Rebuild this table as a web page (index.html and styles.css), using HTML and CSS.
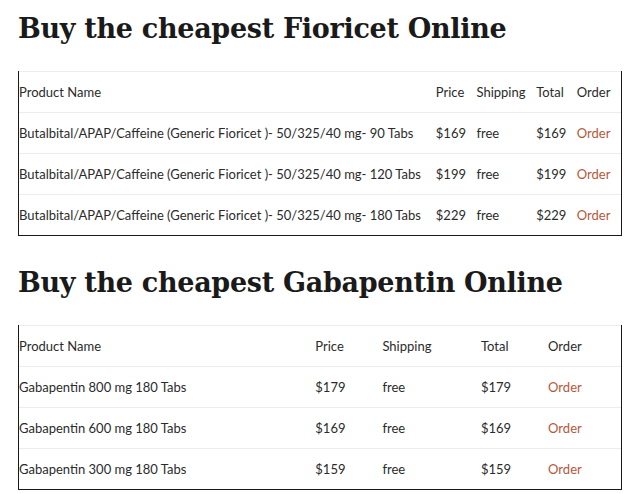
FILE: index.html
```html
<!DOCTYPE html>
<html>
<head>
<meta charset="utf-8">
<link rel="stylesheet" href="styles.css">
</head>
<body>
<main class="page">
  <section class="block">
    <h1 class="title">Buy the cheapest Fioricet Online</h1>
    <table class="prices">
      <tr><td>Product Name</td><td>Price</td><td>Shipping</td><td>Total</td><td>Order</td></tr>
      <tr><td>Butalbital/APAP/Caffeine (Generic Fioricet )- 50/325/40 mg- 90 Tabs</td><td>$169</td><td>free</td><td>$169</td><td><a class="order" href="#">Order</a></td></tr>
      <tr><td>Butalbital/APAP/Caffeine (Generic Fioricet )- 50/325/40 mg- 120 Tabs</td><td>$199</td><td>free</td><td>$199</td><td><a class="order" href="#">Order</a></td></tr>
      <tr><td>Butalbital/APAP/Caffeine (Generic Fioricet )- 50/325/40 mg- 180 Tabs</td><td>$229</td><td>free</td><td>$229</td><td><a class="order" href="#">Order</a></td></tr>
    </table>
  </section>
  <section class="block">
    <h1 class="title">Buy the cheapest Gabapentin Online</h1>
    <table class="prices">
      <tr><td>Product Name</td><td>Price</td><td>Shipping</td><td>Total</td><td>Order</td></tr>
      <tr><td>Gabapentin 800 mg 180 Tabs</td><td>$179</td><td>free</td><td>$179</td><td><a class="order" href="#">Order</a></td></tr>
      <tr><td>Gabapentin 600 mg 180 Tabs</td><td>$169</td><td>free</td><td>$169</td><td><a class="order" href="#">Order</a></td></tr>
      <tr><td>Gabapentin 300 mg 180 Tabs</td><td>$159</td><td>free</td><td>$159</td><td><a class="order" href="#">Order</a></td></tr>
    </table>
  </section>
</main>
</body>
</html>
```
FILE: styles.css
```css
html, body {
  margin: 0;
  padding: 0;
  background: #fff;
}
.page {
  padding: 11px 10px 0 18px;
  font-family: "Lato", "Noto Sans", sans-serif;
  font-size: 13px;
  color: #2b2b2b;
}
.block {
  margin-bottom: 29px;
}
.title {
  font-family: "DejaVu Serif", serif;
  font-weight: bold;
  font-size: 27px;
  letter-spacing: -0.3px;
  line-height: 36px;
  margin: 0 0 24px;
  color: #1a1a1a;
}
.prices {
  width: 100%;
  border-collapse: separate;
  border-spacing: 0;
  border-left: 1px solid #1a1a1a;
  border-right: 1px solid #1a1a1a;
  border-bottom: 1px solid #1a1a1a;
}
.prices td {
  height: 40px;
  padding: 0 10px 0 0;
  border-top: 1px solid #ececec;
  vertical-align: middle;
  white-space: nowrap;
  text-align: left;
}
.order {
  color: #b5573b;
  text-decoration: none;
}
```
